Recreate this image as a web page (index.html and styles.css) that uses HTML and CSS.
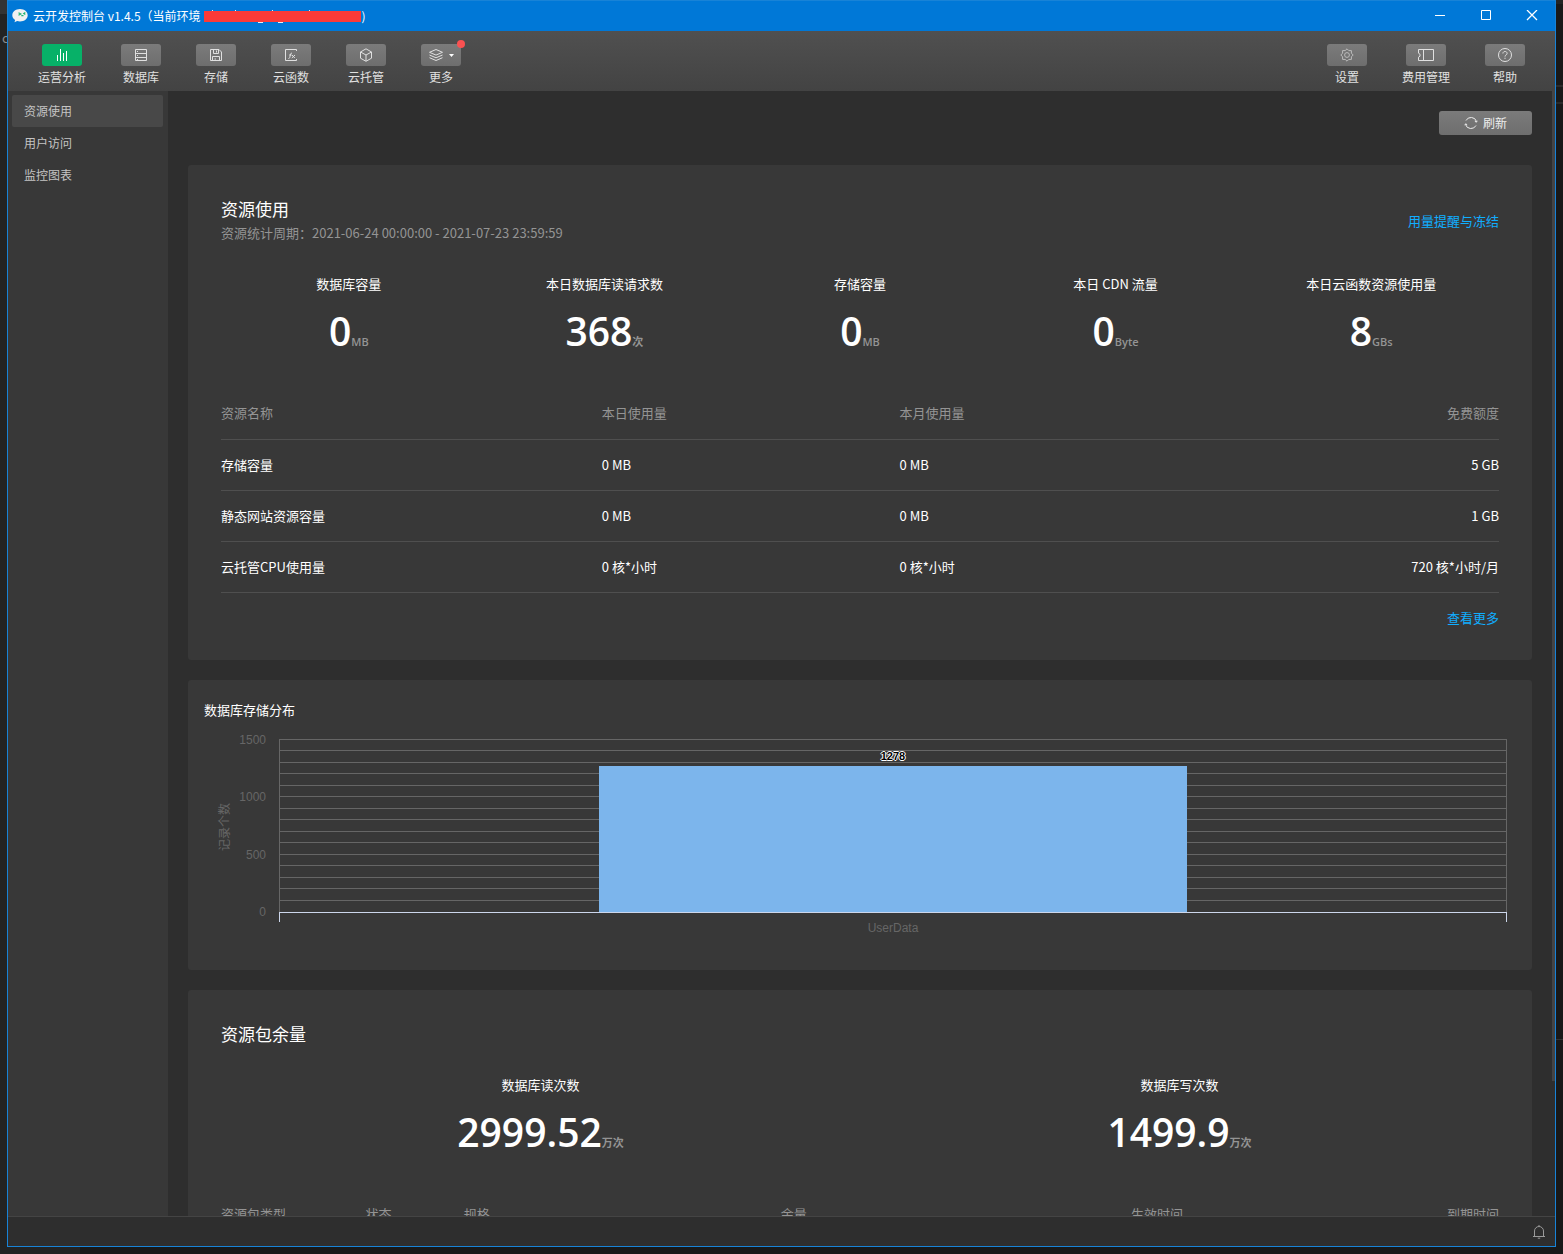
FILE: index.html
```html
<!DOCTYPE html>
<html lang="zh-CN">
<head>
<meta charset="utf-8">
<meta name="viewport" content="width=device-width, initial-scale=1">
<title>云开发控制台</title>
<link rel="stylesheet" href="styles.css">
</head>
<body>
<div class="desktop">
  <aside class="desktop-left" aria-hidden="true"><span class="desktop-left__text">c</span></aside>
  <div class="window">
    <header class="titlebar">
      <svg class="titlebar__logo" width="16" height="16" viewBox="0 0 16 16">
        <path d="M8 1C3.600 1 .3 3.800.3 7.300c0 2 1.100 3.600 2.800 4.800L2.500 14.300l2.600-1.200c.9.300 1.900.4 2.900.4 4.400 0 7.700-2.700 7.700-6.200S12.400 1 8 1z" fill="#f1f1f1"/>
        <path d="M6.500 4.800 8.800 6 6.500 7.200M9.300 7.600h2.200M13.300 4.600 11.800 5.500l1.500 1" fill="none" stroke="#22b573" stroke-width="1.200"/>
      </svg>
      <h1 class="titlebar__text">云开发控制台 v1.4.5（当前环境</h1>
      <svg class="titlebar__mask" width="158" height="16" viewBox="0 0 158 16">
        <path d="M8.500 2v3M31.500 2v3M68.500 2v3M105.500 2v3M54 14.500h5M74 14.500h5" stroke="#e4effa" fill="none"/>
        <path d="M0 3h157v11H0z" fill="#fb3a38"/>
      </svg>
      <span class="titlebar__text">)</span>
      <div class="titlebar__controls">
        <button class="winbtn" type="button" aria-label="最小化"><svg width="12" height="12" viewBox="0 0 12 12"><path d="M1 5.500h10"/></svg></button>
        <button class="winbtn" type="button" aria-label="最大化"><svg width="12" height="12" viewBox="0 0 12 12"><path d="M1.500.500h9v9h-9z"/></svg></button>
        <button class="winbtn" type="button" aria-label="关闭"><svg width="12" height="12" viewBox="0 0 12 12"><path d="M1 0l10 10M11 0 1 10" stroke-width="1.300"/></svg></button>
      </div>
    </header>

    <nav class="toolbar">
      <div class="toolbar__group">
        <button class="tool tool--active" type="button">
          <span class="tool__icon"><svg width="14" height="14" viewBox="0 0 14 14"><path d="M2.500 7v6M5.500 1v12M8.500 5v8M11.500 3v10"/></svg></span>
          <span class="tool__label">运营分析</span>
        </button>
        <button class="tool" type="button">
          <span class="tool__icon"><svg width="14" height="14" viewBox="0 0 14 14"><path d="M1.500 1.500h11v11h-11zM1.500 5.500h11M1.500 9.500h11M3 3.500h1M3 7.500h1M3 11.500h1"/></svg></span>
          <span class="tool__label">数据库</span>
        </button>
        <button class="tool" type="button">
          <span class="tool__icon"><svg width="14" height="14" viewBox="0 0 14 14"><path d="M1.500 1.500h8.500l2.500 2.500v8.500h-11zM4.500 1.500v4h5v-4M7.500 2.500v2M3.500 12.500v-4h7v4M5.500 11h1.500"/></svg></span>
          <span class="tool__label">存储</span>
        </button>
        <button class="tool" type="button">
          <span class="tool__icon"><svg width="14" height="14" viewBox="0 0 14 14"><path d="M12.500 3V1.500h-11v11h11V11"/><path d="M4.500 10.500c1.200 0 1.300-1 1.600-2.500s.5-3 1.900-3M5.200 7h2.400M8 7l2.800 3M11 7l-3.200 3"/></svg></span>
          <span class="tool__label">云函数</span>
        </button>
        <button class="tool" type="button">
          <span class="tool__icon"><svg width="14" height="14" viewBox="0 0 14 14"><path d="M7 .8 12.500 4v6.200L7 13.300 1.500 10.200V4zM1.500 4 7 7l5.500-3M7 7v6"/></svg></span>
          <span class="tool__label">云托管</span>
        </button>
        <button class="tool" type="button">
          <span class="tool__icon tool__icon--menu">
            <svg width="14" height="14" viewBox="0 0 14 14"><path d="M7 1.500 13.500 4.300 7 7.100.500 4.300zM.5 7 7 9.800 13.500 7M.5 9.700 7 12.500l6.500-2.800"/></svg>
            <svg class="caret" width="5" height="3" viewBox="0 0 5 3"><path d="M0 0h5L2.500 3z"/></svg>
            <i class="tool__dot"></i>
          </span>
          <span class="tool__label">更多</span>
        </button>
      </div>
      <div class="toolbar__group">
        <button class="tool" type="button">
          <span class="tool__icon tool__icon--dim"><svg width="14" height="14" viewBox="0 0 14 14"><path d="M7 .8 8.800 2.600h2.600v2.600L13.200 7l-1.800 1.800v2.600H8.800L7 13.200 5.200 11.400H2.600V8.800L.8 7l1.800-1.800V2.600h2.600z"/><circle cx="7" cy="7" r="2.400"/></svg></span>
          <span class="tool__label">设置</span>
        </button>
        <button class="tool" type="button">
          <span class="tool__icon"><svg width="18" height="14" viewBox="0 0 18 14"><path d="M1.500 1.500h15v11h-15V9.200l1.500-1v-2l-1.500-1zM6.500 2v10"/></svg></span>
          <span class="tool__label">费用管理</span>
        </button>
        <button class="tool" type="button">
          <span class="tool__icon"><svg width="14" height="14" viewBox="0 0 14 14"><circle cx="7" cy="7" r="6.500"/><path d="M4.900 5.500c0-2.700 4.200-2.700 4.200-.1C9.100 7 7 6.900 7 8.600M7 9.700v1.200"/></svg></span>
          <span class="tool__label">帮助</span>
        </button>
      </div>
    </nav>

    <div class="body">
      <nav class="sidebar">
        <a class="sidebar__item sidebar__item--active" href="#usage">资源使用</a>
        <a class="sidebar__item" href="#visits">用户访问</a>
        <a class="sidebar__item" href="#charts">监控图表</a>
      </nav>

      <div class="viewport">
        <main class="content">
          <div class="actions">
            <button class="refresh" type="button">
              <svg width="14" height="14" viewBox="0 0 14 14"><path d="M1.500 8.500A5.700 5.700 0 0 0 12 9.500M12.500 5.500A5.700 5.700 0 0 0 2 4.500"/><path d="M.8 9.200 1.600 7.800l1.600 1M10.800 5.200l1.600 1 .8-1.400"/></svg>
              刷新
            </button>
          </div>

          <section class="card card--usage" id="usage">
            <div class="card__head">
              <div>
                <h2 class="card__title">资源使用</h2>
                <p class="card__sub">资源统计周期：2021-06-24 00:00:00 - 2021-07-23 23:59:59</p>
              </div>
              <a class="link" href="#alert">用量提醒与冻结</a>
            </div>
            <ul class="stats">
              <li class="stat"><span class="stat__label">数据库容量</span><span class="stat__value">0<small>MB</small></span></li>
              <li class="stat"><span class="stat__label">本日数据库读请求数</span><span class="stat__value">368<small>次</small></span></li>
              <li class="stat"><span class="stat__label">存储容量</span><span class="stat__value">0<small>MB</small></span></li>
              <li class="stat"><span class="stat__label">本日 CDN 流量</span><span class="stat__value">0<small>Byte</small></span></li>
              <li class="stat"><span class="stat__label">本日云函数资源使用量</span><span class="stat__value">8<small>GBs</small></span></li>
            </ul>
            <table class="table table--usage">
              <thead>
                <tr><th>资源名称</th><th>本日使用量</th><th>本月使用量</th><th>免费额度</th></tr>
              </thead>
              <tbody>
                <tr><td>存储容量</td><td>0 MB</td><td>0 MB</td><td>5 GB</td></tr>
                <tr><td>静态网站资源容量</td><td>0 MB</td><td>0 MB</td><td>1 GB</td></tr>
                <tr><td>云托管CPU使用量</td><td>0 核*小时</td><td>0 核*小时</td><td>720 核*小时/月</td></tr>
              </tbody>
            </table>
            <p class="more"><a class="link" href="#more">查看更多</a></p>
          </section>

          <section class="card card--chart">
            <h2 class="chart-title">数据库存储分布</h2>
            <div class="chart">
              <span class="chart__ytitle">记录个数</span>
              <div class="chart__yaxis"><span>1500</span><span>1000</span><span>500</span><span>0</span></div>
              <div class="chart__main">
                <div class="chart__plot">
                  <i></i><i></i><i></i><i></i><i></i><i></i><i></i><i></i><i></i><i></i><i></i><i></i><i></i><i></i><i></i>
                  <div class="chart__bar" style="height:84.400%"><span class="chart__value">1278</span></div>
                </div>
                <div class="chart__xaxis">UserData</div>
              </div>
            </div>
          </section>

          <section class="card card--package">
            <h2 class="card__title">资源包余量</h2>
            <ul class="stats stats--package">
              <li class="stat"><span class="stat__label">数据库读次数</span><span class="stat__value">2999.52<small>万次</small></span></li>
              <li class="stat"><span class="stat__label">数据库写次数</span><span class="stat__value">1499.9<small>万次</small></span></li>
            </ul>
            <table class="table table--package">
              <thead>
                <tr><th>资源包类型</th><th>状态</th><th>规格</th><th>余量</th><th>生效时间</th><th>到期时间</th></tr>
              </thead>
            </table>
          </section>
        </main>
        <div class="scroll-thumb"></div>
      </div>
    </div>

    <footer class="statusbar">
      <button class="bell" type="button" aria-label="通知"><svg width="12" height="14" viewBox="0 0 12 14"><path d="M1.500 11.500V6a4.500 4.500 0 0 1 9 0v5.500M0 11.500h12M6 0v1.500M4.800 13.200h2.400"/></svg></button>
    </footer>
  </div>
  <aside class="desktop-right" aria-hidden="true"></aside>
</div>
</body>
</html>
```
FILE: styles.css
```css
* { box-sizing: border-box; }

body, h1, h2, p, ul { margin: 0; padding: 0; }

body {
  background: #1a1a1a;
  color: #fff;
  font: 13px/20px "Noto Sans CJK SC", "Noto Sans", sans-serif;
}

button {
  border: 0;
  padding: 0;
  background: none;
  color: inherit;
  font: inherit;
}

a { text-decoration: none; }

svg { display: block; flex: none; fill: none; stroke: currentColor; }

/* Strip of desktop that shows round the window */
.desktop {
  display: flex;
  height: 100vh;
  overflow: hidden;
  padding-bottom: 7px;
  background: linear-gradient(90deg, #232323 80px, #191919 80px);
}

.desktop-left {
  flex: none;
  width: 7px;
  padding-top: 28px;
  overflow: hidden;
  background: linear-gradient(#333 14px, #232323 14px);
}

.desktop-left__text { padding-left: 2px; color: #8a8a8a; font-size: 13px; }

.desktop-right {
  flex: none;
  width: 7px;
  background: linear-gradient(#242424 4px, #191919 4px, #191919 85px, #2b2b2b 85px, #2b2b2b 87px, #191919 87px, #191919 102px, #2b2b2b 102px, #2b2b2b 104px, #191919 104px, #191919 1039px, #333 1039px, #333 1040px, #191919 1040px);
}

.window {
  display: flex;
  flex: 1;
  flex-direction: column;
  min-width: 0;
  border: 1px solid #1883d7;
  background: #2e2e2e;
}

/* Title bar */
.titlebar {
  display: flex;
  flex: none;
  align-items: center;
  height: 30px;
  padding-left: 4px;
  background: #0078d7;
  font-size: 12px;
}

.titlebar__logo { margin-right: 5px; stroke: none; }
.titlebar__mask { margin-left: 3px; stroke: none; }
.titlebar__text { font-size: 12px; font-weight: 400; white-space: nowrap; }
.titlebar__controls { display: flex; margin-left: auto; }
.winbtn { display: grid; place-items: center; width: 46px; height: 30px; }

/* Tool bar */
.toolbar {
  display: flex;
  flex: none;
  justify-content: space-between;
  height: 60px;
  padding: 13px 30px 0;
  background: linear-gradient(#505050, #434343);
}

.toolbar__group { display: flex; align-items: flex-start; gap: 35px; }

.tool {
  display: flex;
  flex-direction: column;
  align-items: center;
  min-width: 40px;
  color: #e0e0e0;
  font-size: 12px;
}

.tool__icon {
  position: relative;
  display: flex;
  align-items: center;
  justify-content: center;
  width: 40px;
  height: 22px;
  border-radius: 3px;
  background: linear-gradient(#7b7b7b, #6e6e6e);
}

.tool--active .tool__icon { background: #07b168; color: #fff; }
.tool__icon--dim { color: #bcbcbc; }
.tool__icon--menu { gap: 6px; }
.caret { fill: #fff; stroke: none; }
.tool__label { line-height: 22px; }

.tool__dot {
  position: absolute;
  top: -4px;
  right: -4px;
  width: 8px;
  height: 8px;
  border-radius: 50%;
  background: #fa5151;
}

/* Body */
.body { display: flex; flex: 1; min-height: 0; }

.sidebar {
  flex: none;
  width: 160px;
  padding: 4px 5px 0 4px;
  background: #383838;
}

.sidebar__item {
  display: block;
  padding: 0 12px;
  border-radius: 2px;
  color: #c4c4c4;
  font-size: 12px;
  line-height: 32px;
}

.sidebar__item--active { background: #484848; }

.viewport { position: relative; flex: 1; min-width: 0; }

.content {
  display: flex;
  flex-direction: column;
  gap: 20px;
  height: 100%;
  padding: 20px 23px 20px 20px;
  overflow-y: auto;
  scrollbar-width: none;
}

.scroll-thumb {
  position: absolute;
  top: 0;
  right: 0;
  width: 3px;
  height: 88%;
  background: #444;
}

.actions { display: flex; justify-content: flex-end; margin-bottom: 10px; }

.refresh {
  display: flex;
  align-items: center;
  justify-content: center;
  gap: 5px;
  width: 93px;
  height: 24px;
  border-radius: 3px;
  background: linear-gradient(#7b7b7b, #6e6e6e);
  color: #eee;
  font-size: 12px;
}

.card { flex: none; padding: 32px 33px; border-radius: 3px; background: #383838; }
.card--usage { padding-bottom: 17px; }
.card__head { display: flex; align-items: center; justify-content: space-between; }
.card__title { font-size: 17px; font-weight: 400; line-height: 24px; }
.card__sub { color: #949494; line-height: 24px; }
.link { color: #10aeff; }

.stats { display: flex; margin: 29px 0 30px; list-style: none; }
.stat { display: flex; flex: 1; flex-direction: column; align-items: center; gap: 10px; }

.stat__value {
  font: 600 39px/54px "Open Sans", "Noto Sans CJK SC", sans-serif;
}

.stat__value small { color: #949494; font-size: 11px; line-height: 11px; }

.table { width: 100%; border-collapse: collapse; table-layout: fixed; }

.table th,
.table td {
  height: 51px;
  padding: 0;
  border-bottom: 1px solid #4f4f4f;
  font-weight: 400;
  text-align: left;
}

.table th { color: #949494; }
.table th:last-child,
.table td:last-child { text-align: right; }

.table--usage th:nth-child(1) { width: 29.800%; }
.table--usage th:nth-child(2),
.table--usage th:nth-child(3) { width: 23.300%; }

.table--package th:nth-child(1) { width: 11.300%; }
.table--package th:nth-child(2) { width: 7.700%; }
.table--package th:nth-child(3) { width: 24.800%; }
.table--package th:nth-child(4) { width: 27.400%; }

.more { line-height: 50px; text-align: right; }

/* Chart */
.card--chart { padding: 20px 25px 26px 16px; }
.chart-title { font-size: 13px; font-weight: 400; line-height: 20px; }

.chart {
  display: flex;
  margin-top: 12px;
  padding-left: 13px;
  color: #666;
  font: 12px/16px "Liberation Sans", "Noto Sans CJK SC", sans-serif;
}

.chart__ytitle {
  height: 189px;
  text-align: center;
  text-orientation: sideways;
  transform: rotate(180deg);
  writing-mode: vertical-rl;
}

.chart__yaxis {
  display: flex;
  flex-direction: column;
  justify-content: space-between;
  width: 33px;
  height: 189px;
  margin-right: 13px;
  text-align: right;
}

.chart__main { flex: 1; padding-top: 7px; }

.chart__plot {
  position: relative;
  display: flex;
  flex-direction: column;
  height: 173px;
  border: solid #666;
  border-width: 0 1px;
}

.chart__plot i { flex: 1; border-top: 1px solid #666; }

.chart__bar {
  position: absolute;
  bottom: 0;
  left: 26%;
  width: 48%;
  background: #7cb5ec;
}

.chart__value {
  position: absolute;
  bottom: 100%;
  left: 0;
  width: 100%;
  padding-bottom: 2px;
  color: #000;
  font-size: 11px;
  font-weight: 700;
  text-align: center;
  text-shadow: 1px 0 #fff, -1px 0 #fff, 0 1px #fff, 0 -1px #fff;
}

.chart__xaxis {
  height: 32px;
  padding-top: 7px;
  border-top: 1px solid #ccd6eb;
  background:
    linear-gradient(#ccd6eb, #ccd6eb) left top / 1px 9px no-repeat,
    linear-gradient(#ccd6eb, #ccd6eb) right top / 1px 9px no-repeat;
  text-align: center;
}

/* Status bar */
.statusbar {
  display: flex;
  flex: none;
  align-items: center;
  justify-content: flex-end;
  height: 30px;
  padding-right: 10px;
  border-top: 1px solid #444;
}

.bell { color: #9a9a9a; }
```
